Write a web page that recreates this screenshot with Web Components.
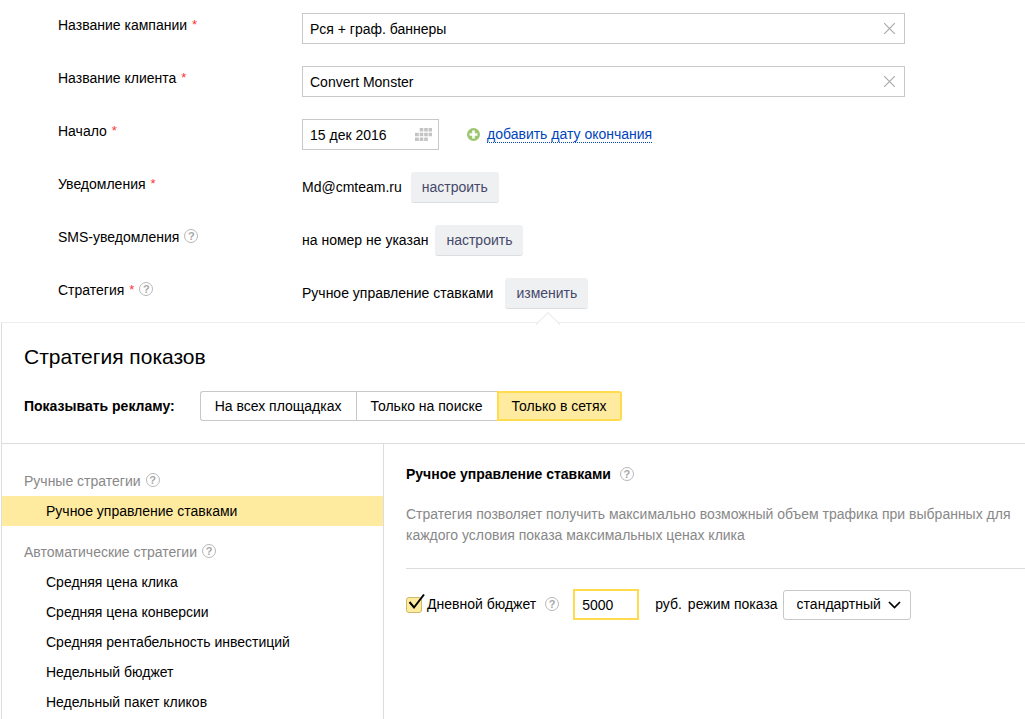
<!DOCTYPE html>
<html lang="ru">
<head>
<meta charset="utf-8">
<meta name="viewport" content="width=device-width, initial-scale=1">
<title>Параметры кампании</title>
<style>
  html, body { margin: 0; background: #fff; }
  body { font: 14px/21px "Liberation Sans", Arial, sans-serif; color: #000; }
</style>
</head>
<body>
<campaign-page></campaign-page>

<script>
class BaseElement extends HTMLElement {
  constructor() {
    super();
    this.attachShadow({ mode: 'open' }).innerHTML = this.constructor.markup;
  }
}

class HelpHint extends BaseElement {
  static markup = `
    <style>
      :host { display: inline-flex; flex: none; padding-bottom: 2px; }
      button {
        box-sizing: border-box; width: 14px; height: 14px; padding: 0;
        display: flex; align-items: center; justify-content: center;
        border: 1px solid #b8b8b8; border-radius: 50%; background: none;
        color: #a8a8a8; font: bold 11px/12px "Liberation Sans", Arial, sans-serif; cursor: pointer;
      }
    </style>
    <button type="button" aria-label="Справка">?</button>`;
}

/* Grey action button */
class SoftButton extends BaseElement {
  static markup = `
    <style>
      :host { display: inline-block; position: relative; }
      button {
        display: block; box-sizing: border-box; height: 31px; padding: 0 11px;
        border: 0; border-bottom: 1px solid #dcdde0; border-radius: 3px;
        background: #eff0f2; color: #45486a; font: inherit; cursor: pointer;
      }
      svg { display: none; position: absolute; z-index: 1; top: calc(100% + 3px); left: calc(50% - 12px); }
      :host([open]) svg { display: block; }
    </style>
    <button type="button"><slot></slot></button>
    <svg width="26" height="13" viewBox="0 0 26 13" aria-hidden="true">
      <path d="M1 12.5 13 .7 25 12.5z" fill="#fff"/>
      <path d="M1 12.5 13 .7 25 12.5" fill="none" stroke="#e2e2e2"/>
    </svg>`;
}

/* Bordered box round an input, with an icon at its right end */
class TextField extends BaseElement {
  static markup = `
    <style>
      :host {
        display: flex; align-items: center; box-sizing: border-box; height: 31px;
        border: 1px solid #c8c8c8; background: #fff;
      }
      :host([accent]) { border: 2px solid #ffdb4d; }
      ::slotted(input) {
        flex: 1; min-width: 0; width: 100%; box-sizing: border-box; height: 100%; padding: 0 7px;
        border: 0; outline: 0; background: none; font: inherit; color: inherit;
      }
    </style>
    <slot></slot><slot name="icon"></slot>`;
}

class ClearButton extends BaseElement {
  static markup = `
    <style>
      :host { display: block; padding-right: 9px; }
      button { display: block; padding: 0; border: 0; background: none; cursor: pointer; }
      svg { display: block; }
    </style>
    <button type="button" aria-label="Очистить">
      <svg width="11" height="11" viewBox="0 0 11 11"><path d="M0 0 11 11M11 0 0 11" stroke="#aaa" stroke-width="1.2"/></svg>
    </button>`;
}

class CalendarButton extends BaseElement {
  static markup = `
    <style>
      :host { display: block; padding-right: 6px; }
      button { display: block; padding: 0; border: 0; background: none; cursor: pointer; }
      svg { display: block; }
    </style>
    <button type="button" aria-label="Календарь">
      <svg width="17" height="13" viewBox="0 0 17 13" fill="#c4c4c4">
        <path d="M4.700 0h3.600v3.600H4.700zM9.200 0h3.600v3.600H9.200zM13.600 0H17v3.600h-3.400zM0 4.700h3.800v3.600H0zM4.700 4.700h3.600v3.600H4.700zM9.200 4.700h3.600v3.600H9.200zM13.600 4.700H17v3.600h-3.400zM0 9.400h3.800V13H0zM4.700 9.400h3.600V13H4.700zM9.200 9.400h3.600V13H9.200z"/>
      </svg>
    </button>`;
}

/* One line of the form: caption on the left, control on the right */
class FormRow extends BaseElement {
  static markup = `
    <style>
      :host { display: grid; grid-template-columns: 244px minmax(0, 1fr); align-items: start; }
      .caption { display: flex; align-items: center; gap: 5px; line-height: 24px; }
      .mark { display: none; color: #f33; font-size: 13px; }
      :host([required]) .mark { display: inline; }
      .control { display: flex; align-items: center; min-height: 31px; }
    </style>
    <div class="caption"><slot name="caption"></slot><span class="mark">*</span><slot name="hint"></slot></div>
    <div class="control"><slot></slot></div>`;
}

class CampaignForm extends BaseElement {
  static markup = `
    <style>
      :host { display: block; padding: 13px 120px 13px 58px; }
      form { display: grid; gap: 22px; }
      .wide { flex: 1; }
      .date { width: 137px; }
      .add { display: flex; align-items: center; gap: 7px; margin-left: 28px; }
      a { color: #04b; text-decoration: none; border-bottom: 1px dotted #04b; line-height: 16px; }
      .near { margin-left: 7px; }
      .mid { margin-left: 9px; }
      .far { margin-left: 12px; }
    </style>
    <form>
      <form-row required>
        <label slot="caption" for="campaign">Название кампании</label>
        <text-field class="wide"><input id="campaign" value="Рся + граф. баннеры"><clear-button slot="icon"></clear-button></text-field>
      </form-row>
      <form-row required>
        <label slot="caption" for="client">Название клиента</label>
        <text-field class="wide"><input id="client" value="Convert Monster"><clear-button slot="icon"></clear-button></text-field>
      </form-row>
      <form-row required>
        <label slot="caption" for="start">Начало</label>
        <text-field class="date"><input id="start" value="15 дек 2016"><calendar-button slot="icon"></calendar-button></text-field>
        <div class="add">
          <svg width="13" height="13" viewBox="0 0 13 13" aria-hidden="true">
            <circle cx="6.500" cy="6.500" r="6.500" fill="#9cc66f"/>
            <path d="M6.500 2.600v7.800M2.600 6.500h7.800" stroke="#fff" stroke-width="2.600"/>
          </svg>
          <a href="#end">добавить дату окончания</a>
        </div>
      </form-row>
      <form-row required>
        <span slot="caption">Уведомления</span>
        <span>Md@cmteam.ru</span><soft-button class="mid">настроить</soft-button>
      </form-row>
      <form-row>
        <span slot="caption">SMS-уведомления</span><help-hint slot="hint"></help-hint>
        <span>на номер не указан</span><soft-button class="near">настроить</soft-button>
      </form-row>
      <form-row required>
        <span slot="caption">Стратегия</span><help-hint slot="hint"></help-hint>
        <span>Ручное управление ставками</span><soft-button class="far" open>изменить</soft-button>
      </form-row>
    </form>`;
}

/* Joined radio buttons */
class PlaceSwitch extends BaseElement {
  static markup = `
    <style>
      :host { display: block; }
      fieldset { display: flex; margin: 0; padding: 0; border: 0; min-width: 0; }
      input { position: absolute; opacity: 0; margin: 0; }
      label {
        box-sizing: border-box; height: 30px; padding: 0 14px; line-height: 28px;
        border: 1px solid #c8c8c8; border-right-width: 0; cursor: pointer; white-space: nowrap;
      }
      label:first-of-type { border-radius: 3px 0 0 3px; }
      label:last-of-type { border-right-width: 1px; border-radius: 0 3px 3px 0; }
      input:checked + label { padding: 0 13px; line-height: 26px; border: 2px solid #ffdb4d; background: #ffeba0; }
    </style>
    <fieldset aria-label="Показывать рекламу">
      <input type="radio" name="place" id="all"><label for="all">На всех площадках</label>
      <input type="radio" name="place" id="search"><label for="search">Только на поиске</label>
      <input type="radio" name="place" id="net" checked><label for="net">Только в сетях</label>
    </fieldset>`;
}

class StrategyGroup extends BaseElement {
  static markup = `
    <style>
      :host { display: block; }
      .title { display: flex; align-items: center; gap: 5px; height: 30px; padding-left: 22px; color: #888; }
    </style>
    <div class="title"><slot name="title"></slot><help-hint></help-hint></div>
    <slot></slot>`;
}

class StrategyItem extends BaseElement {
  static markup = `
    <style>
      :host { display: block; }
      a { display: block; padding-left: 44px; line-height: 30px; color: #000; text-decoration: none; }
      :host([selected]) a { background: #ffeba0; }
    </style>
    <a href="#strategy"><slot></slot></a>`;
}

class StrategyList extends BaseElement {
  static markup = `
    <style>
      :host { display: grid; align-content: start; gap: 11px; padding-top: 22px; border-right: 1px solid #ddd; }
    </style>
    <strategy-group><span slot="title">Ручные стратегии</span>
      <strategy-item selected>Ручное управление ставками</strategy-item>
    </strategy-group>
    <strategy-group><span slot="title">Автоматические стратегии</span>
      <strategy-item>Средняя цена клика</strategy-item>
      <strategy-item>Средняя цена конверсии</strategy-item>
      <strategy-item>Средняя рентабельность инвестиций</strategy-item>
      <strategy-item>Недельный бюджет</strategy-item>
      <strategy-item>Недельный пакет кликов</strategy-item>
    </strategy-group>`;
}

/* Tick box with a mark that reaches past its corner */
class TickBox extends BaseElement {
  static markup = `
    <style>
      :host { display: block; position: relative; }
      ::slotted(input) {
        appearance: none; display: block; box-sizing: border-box; width: 16px; height: 16px; margin: 0;
        border: 1px solid #cdb96c; border-radius: 3px; background: #ffeba0;
      }
      svg { position: absolute; left: 2px; bottom: 3px; pointer-events: none; }
    </style>
    <slot></slot>
    <svg width="17" height="17" viewBox="0 0 17 17" aria-hidden="true"><path d="M1.500 9 6 14.500 16 1.500" fill="none" stroke="#000" stroke-width="2"/></svg>`;
}

class SelectBox extends BaseElement {
  static markup = `
    <style>
      :host { display: block; position: relative; }
      ::slotted(select) {
        appearance: none; display: block; box-sizing: border-box; height: 30px; padding: 0 28px 0 13px;
        border: 1px solid #c8c8c8; border-radius: 3px; background: #fff; color: #000; font: inherit;
      }
      svg { position: absolute; right: 10px; top: 11px; pointer-events: none; }
    </style>
    <slot></slot>
    <svg width="13" height="8" viewBox="0 0 13 8" aria-hidden="true"><path d="M1 1 6.500 6.500 12 1" fill="none" stroke="#000" stroke-width="1.700"/></svg>`;
}

class StrategyDetails extends BaseElement {
  static markup = `
    <style>
      :host { display: block; padding: 20px 0 20px 22px; }
      header { display: flex; align-items: center; gap: 9px; }
      h3 { margin: 0; font-size: 14px; line-height: 21px; }
      p { margin: 19px 0 0; padding-right: 8px; color: #888; }
      .budget { display: flex; flex-wrap: wrap; align-items: center; margin-top: 22px; padding-top: 20px; border-top: 1px solid #ddd; }
      .day { margin: 0 9px 0 5px; }
      text-field { width: 66px; margin: 0 16px 0 14px; }
      .mode { margin: 0 5px 0 6px; }
    </style>
    <header><h3>Ручное управление ставками</h3><help-hint></help-hint></header>
    <p>Стратегия позволяет получить максимально возможный объем трафика при выбранных для каждого условия показа максимальных ценах клика</p>
    <div class="budget">
      <tick-box><input type="checkbox" id="day" checked></tick-box>
      <label class="day" for="day">Дневной бюджет</label><help-hint></help-hint>
      <text-field accent><input id="sum" aria-label="Сумма" value="5000"></text-field>
      <label for="sum">руб.</label>
      <label class="mode" for="mode">режим показа</label>
      <select-box><select id="mode"><option>стандартный</option></select></select-box>
    </div>`;
}

class StrategyPanel extends BaseElement {
  static markup = `
    <style>
      :host {
        display: flex; flex-direction: column; margin-left: 1px; background: #fff;
        border-top: 1px solid #eee; border-left: 1px solid #ddd;
      }
      header { padding: 20px 22px 22px; border-bottom: 1px solid #ddd; }
      h2 { margin: 0; font-size: 21px; font-weight: normal; line-height: 28px; }
      .place { display: flex; align-items: center; gap: 25px; margin-top: 20px; }
      .body { flex: 1; display: grid; grid-template-columns: 382px minmax(0, 1fr); }
    </style>
    <header>
      <h2>Стратегия показов</h2>
      <div class="place"><b>Показывать рекламу:</b><place-switch></place-switch></div>
    </header>
    <div class="body"><strategy-list></strategy-list><strategy-details></strategy-details></div>`;
}

class CampaignPage extends BaseElement {
  static markup = `
    <style>
      :host { display: flex; flex-direction: column; min-height: 100vh; }
      strategy-panel { flex: 1; }
    </style>
    <campaign-form></campaign-form>
    <strategy-panel></strategy-panel>`;
}

const elements = {
  'help-hint': HelpHint, 'soft-button': SoftButton, 'text-field': TextField,
  'clear-button': ClearButton, 'calendar-button': CalendarButton, 'form-row': FormRow,
  'campaign-form': CampaignForm, 'place-switch': PlaceSwitch, 'strategy-group': StrategyGroup,
  'strategy-item': StrategyItem, 'strategy-list': StrategyList, 'tick-box': TickBox,
  'select-box': SelectBox, 'strategy-details': StrategyDetails, 'strategy-panel': StrategyPanel,
  'campaign-page': CampaignPage
};
for (const [name, type] of Object.entries(elements)) customElements.define(name, type);
</script>
</body>
</html>
